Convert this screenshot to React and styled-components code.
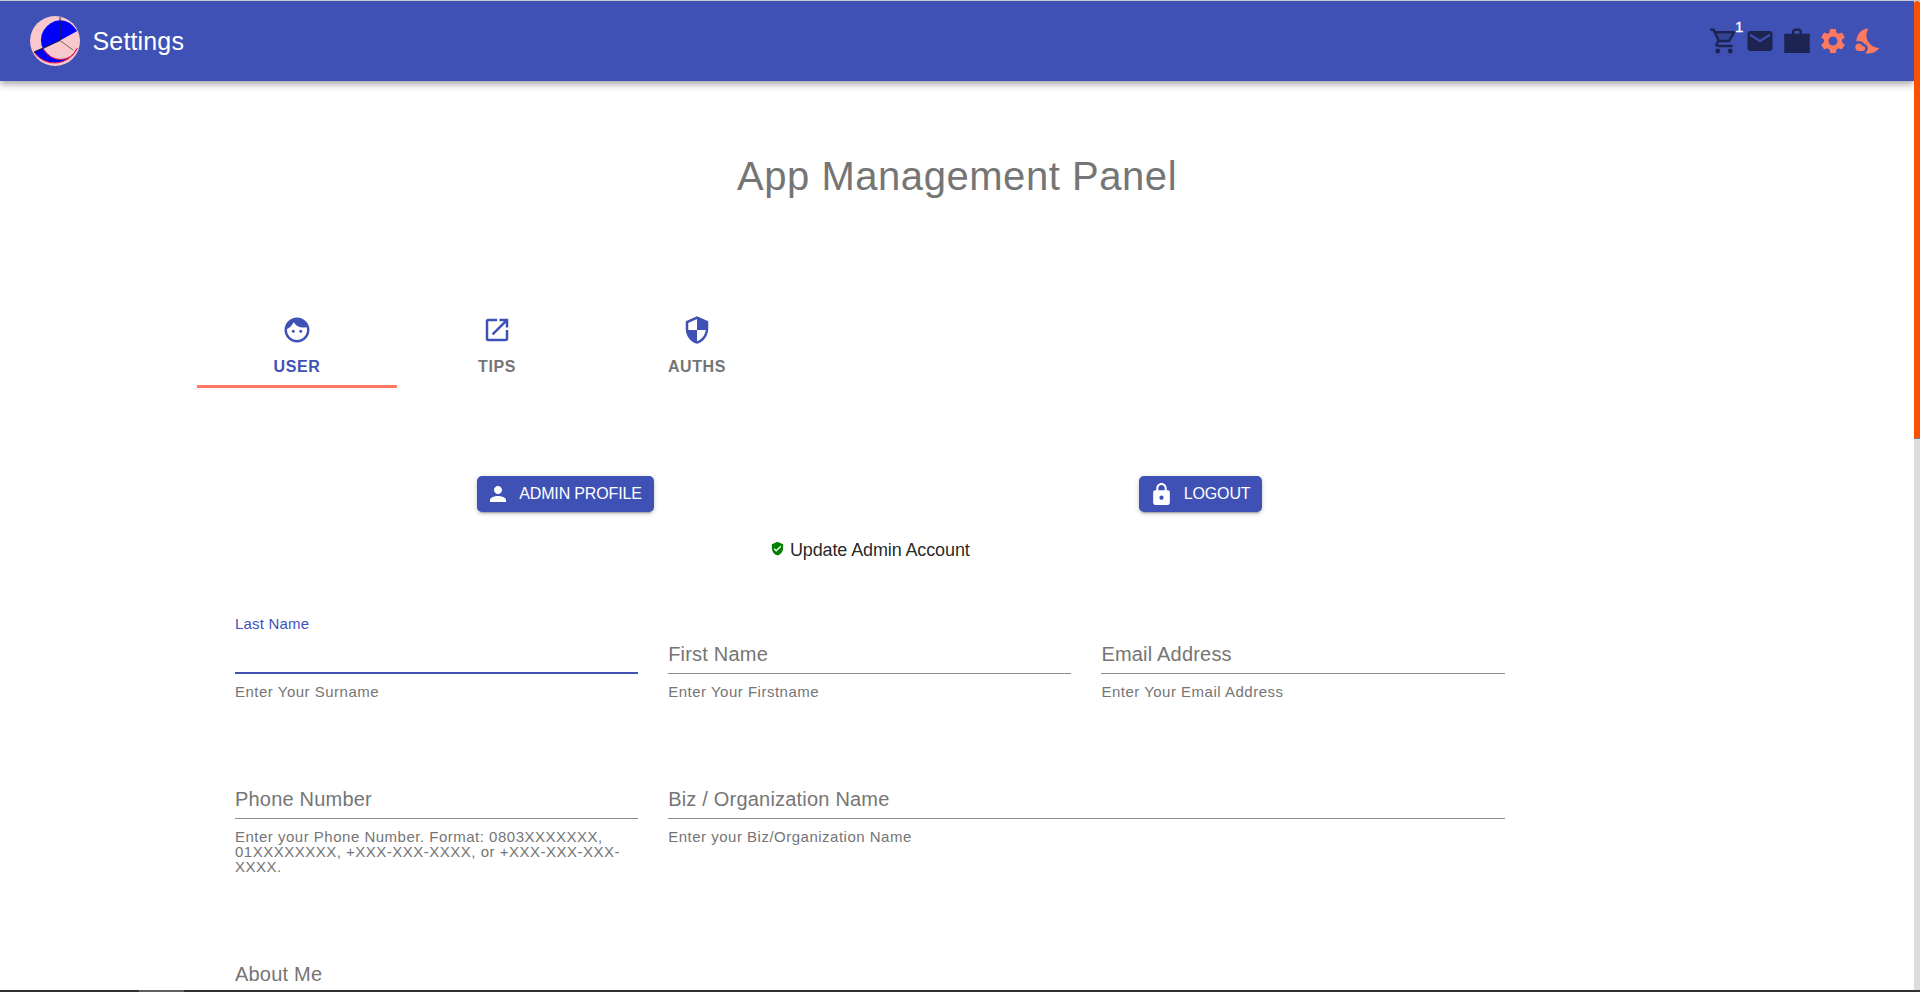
import React from "react";
import styled, { createGlobalStyle } from "styled-components";
import {
  MdEmail, MdSettings, MdNightsStay, MdFace, MdOpenInNew,
  MdSecurity, MdPerson, MdLock, MdVerifiedUser,
} from "react-icons/md";

const INDIGO = "#3f51b5";
const CORAL = "#ff7961";

const GlobalStyle = createGlobalStyle`
  *, *::before, *::after { box-sizing: border-box; }
  body {
    margin: 0;
    background: #fff;
    color: rgba(0, 0, 0, 0.87);
    font-family: "Liberation Sans", Arial, Helvetica, sans-serif;
  }
  svg { display: block; flex: none; }
`;

const Screen = styled.div`
  height: 992px;
  display: flex;
  flex-direction: column;
  overflow: hidden;
  border-top: 1px solid #c9cbd0;
`;

const Viewport = styled.div`
  flex: 1;
  min-height: 0;
  display: flex;
`;

const Page = styled.div`
  flex: 1;
  min-width: 0;
  overflow: hidden;
`;

const ScrollTrack = styled.div`
  width: 6px;
  background: #dcdcdc;
`;

const ScrollThumb = styled.div`
  height: 438px;
  background: #fa5000;
  border-radius: 3px 3px 0 0;
  border-bottom: 1px solid #70809a;
`;

const BottomEdge = styled.div`
  height: 2px;
  padding-left: 139px;
  background: #323236;
`;

const ActiveWindow = styled.div`
  width: 45px;
  height: 2px;
  background: #606063;
`;

const AppBar = styled.header`
  height: 80px;
  display: flex;
  align-items: center;
  padding: 0 30px;
  background: ${INDIGO};
  color: #fff;
  box-shadow: 0 2px 5px -1px rgba(0, 0, 0, 0.2), 0 5px 6px 0 rgba(0, 0, 0, 0.14),
    0 1px 12px 0 rgba(0, 0, 0, 0.12);
`;

const AppName = styled.h6`
  flex: 1;
  margin: 0 0 0 12.5px;
  font-size: 25px;
  font-weight: 400;
  line-height: 40px;
  letter-spacing: 0.15px;
`;

const Actions = styled.nav`
  display: flex;
  align-items: center;
  color: #1d2452;
`;

const ActionIcon = styled.span`
  display: flex;
  position: relative;
  margin-left: ${(p) => p.$gap ?? 6}px;
  color: ${(p) => (p.$accent ? CORAL : "inherit")};
`;

const Badge = styled.span`
  position: absolute;
  left: 26px;
  top: -7px;
  font-size: 15px;
  line-height: 15px;
  font-weight: 400;
  color: #fff;
  -webkit-text-stroke: 0.3px #fff;
`;

const Title = styled.h1`
  margin: 67px 0 0;
  height: 56px;
  line-height: 56px;
  text-align: center;
  font-size: 40px;
  letter-spacing: 0.55px;
  font-weight: 400;
  color: #757575;
`;

const Tabs = styled.div`
  display: flex;
  margin: 94px 0 0 197px;
`;

const Tab = styled.button`
  width: 200px;
  height: 90px;
  padding: 17px 0 0;
  display: flex;
  flex-direction: column;
  align-items: center;
  gap: 10px;
  border: 0;
  border-bottom: 3px solid ${(p) => (p.$active ? CORAL : "transparent")};
  background: none;
  color: ${(p) => (p.$active ? INDIGO : "#757575")};
  font: 700 16px/24px "Liberation Sans", Arial, sans-serif;
  letter-spacing: 0.6px;
  svg { color: ${INDIGO}; }
`;

const Panel = styled.main`
  width: 1269.6px;
  margin: 88px 0 0 235px;
`;

const ButtonRow = styled.div`
  display: flex;
  justify-content: space-around;
  padding-right: 0.6px;
`;

const Button = styled.button`
  width: ${(p) => p.$width}px;
  height: 36px;
  padding: 0 0 0 ${(p) => p.$inset}px;
  display: flex;
  align-items: center;
  gap: ${(p) => p.$gap}px;
  border: 0;
  border-radius: 5px;
  background: ${INDIGO};
  color: #fff;
  font: 400 16px/36px "Liberation Sans", Arial, sans-serif;
  letter-spacing: -0.15px;
  white-space: nowrap;
  box-shadow: 0 4px 1px -3px rgba(0, 0, 0, 0.2), 0 2px 3px 0 rgba(0, 0, 0, 0.14),
    0 1px 6px 0 rgba(0, 0, 0, 0.12);
`;

const Caption = styled.div`
  display: flex;
  justify-content: center;
  align-items: center;
  gap: 5px;
  height: 24px;
  margin-top: 26px;
  font-size: 18px;
  letter-spacing: -0.12px;
  svg { color: green; margin-top: -3px; }
`;

const Form = styled.form`
  display: grid;
  grid-template-columns: repeat(3, 1fr);
  grid-template-rows: 145px 175px 100px;
  column-gap: 30px;
  margin-top: 51px;
`;

const Field = styled.div`
  grid-column: span ${(p) => p.$span || 1};
`;

const Label = styled.label`
  display: flex;
  height: 61px;
  align-items: ${(p) => (p.$focused ? "flex-start" : "flex-end")};
  padding: ${(p) => (p.$focused ? "2px 0 0" : "0 0 7px")};
  font-size: ${(p) => (p.$focused ? 15 : 20)}px;
  line-height: ${(p) => (p.$focused ? 18 : 24)}px;
  letter-spacing: 0.2px;
  color: ${(p) => (p.$focused ? INDIGO : "#757575")};
  border-bottom: ${(p) => (p.$focused ? `2px solid ${INDIGO}` : "1px solid #8d8d8d")};
`;

const Helper = styled.p`
  margin: 10px 0 0;
  font-size: 15px;
  line-height: 15px;
  letter-spacing: 0.5px;
  color: #757575;
`;

function Logo() {
  return (
    <svg width="50" height="50" viewBox="0 0 50 50">
      <circle cx="25" cy="25" r="25" fill="#f8c8cd" />
      <path d="M13 33A20 20 0 0 1 30 4.3Q40 4 47.2 15L30 24.5Z" fill="#00f" />
      <path d="M4 36L13 32Q20 43.5 31 43.5Q42 43 47 32.5A25 25 0 0 1 4 36Z" fill="#00f" />
      <path d="M13 33Q20 43.5 31 43.5Q42 43 47 32.5A24.6 24.6 0 0 1 4 36" fill="none" stroke="#e8103c" strokeWidth="1" />
      <path d="M30 1V24.5L4 36" fill="none" stroke="#222" strokeWidth="1" />
      <path d="M30 24.5L43 34" stroke="#7a6265" strokeWidth="1" />
    </svg>
  );
}

function CartIcon() {
  return (
    <svg width="30" height="30" viewBox="0 0 24 24" fill="currentColor">
      <path d="M15.55 11l2.76-5H6.16l2.37 5z" opacity=".3" />
      <path d="M15.55 13c.75 0 1.41-.41 1.75-1.03l3.58-6.49c.37-.66-.11-1.48-.87-1.48H5.21l-.94-2H1v2h2l3.6 7.59-1.35 2.44C4.52 15.37 5.48 17 7 17h12v-2H7l1.1-2h7.45zM6.16 6h12.15l-2.76 5H8.53L6.16 6zM7 18c-1.1 0-1.99.9-1.99 2S5.9 22 7 22s2-.9 2-2-.9-2-2-2zm10 0c-1.1 0-1.99.9-1.99 2s.89 2 1.99 2 2-.9 2-2-.9-2-2-2z" />
    </svg>
  );
}

function WorkIcon() {
  return (
    <svg width="30" height="30" viewBox="0 0 24 24" fill="currentColor">
      <path d="M22.2 6.2H16V3.7L14.3 2H9.7L8 3.7v2.5H1.8V21.5h20.4zM14 6.2h-4V4h4z" />
    </svg>
  );
}

function TextField({ label, helper, span, focused }) {
  return (
    <Field $span={span}>
      <Label $focused={focused}>{label}</Label>
      {helper && <Helper>{helper}</Helper>}
    </Field>
  );
}

export default function App() {
  return (
    <Screen>
      <GlobalStyle />
      <Viewport>
        <Page>
          <AppBar>
            <Logo />
            <AppName>Settings</AppName>
            <Actions>
              <ActionIcon><CartIcon /><Badge>1</Badge></ActionIcon>
              <ActionIcon><MdEmail size={30} /></ActionIcon>
              <ActionIcon $gap={7}><WorkIcon /></ActionIcon>
              <ActionIcon $accent><MdSettings size={30} /></ActionIcon>
              <ActionIcon $accent><MdNightsStay size={30} /></ActionIcon>
            </Actions>
          </AppBar>
          <Title>App Management Panel</Title>
          <Tabs>
            <Tab $active><MdFace size={30} />USER</Tab>
            <Tab><MdOpenInNew size={30} />TIPS</Tab>
            <Tab><MdSecurity size={30} />AUTHS</Tab>
          </Tabs>
          <Panel>
            <ButtonRow>
              <Button type="button" $width={177} $inset={9} $gap={9}>
                <MdPerson size={24} />ADMIN PROFILE
              </Button>
              <Button type="button" $width={123} $inset={10} $gap={10}>
                <MdLock size={25} />LOGOUT
              </Button>
            </ButtonRow>
            <Caption><MdVerifiedUser size={15} />Update Admin Account</Caption>
            <Form>
              <TextField label="Last Name" helper="Enter Your Surname" focused />
              <TextField label="First Name" helper="Enter Your Firstname" />
              <TextField label="Email Address" helper="Enter Your Email Address" />
              <TextField
                label="Phone Number"
                helper="Enter your Phone Number. Format: 0803XXXXXXX, 01XXXXXXXX, +XXX-XXX-XXXX, or +XXX-XXX-XXX-XXXX."
              />
              <TextField label="Biz / Organization Name" helper="Enter your Biz/Organization Name" span={2} />
              <TextField label="About Me" span={3} />
            </Form>
          </Panel>
        </Page>
        <ScrollTrack><ScrollThumb /></ScrollTrack>
      </Viewport>
      <BottomEdge><ActiveWindow /></BottomEdge>
    </Screen>
  );
}
